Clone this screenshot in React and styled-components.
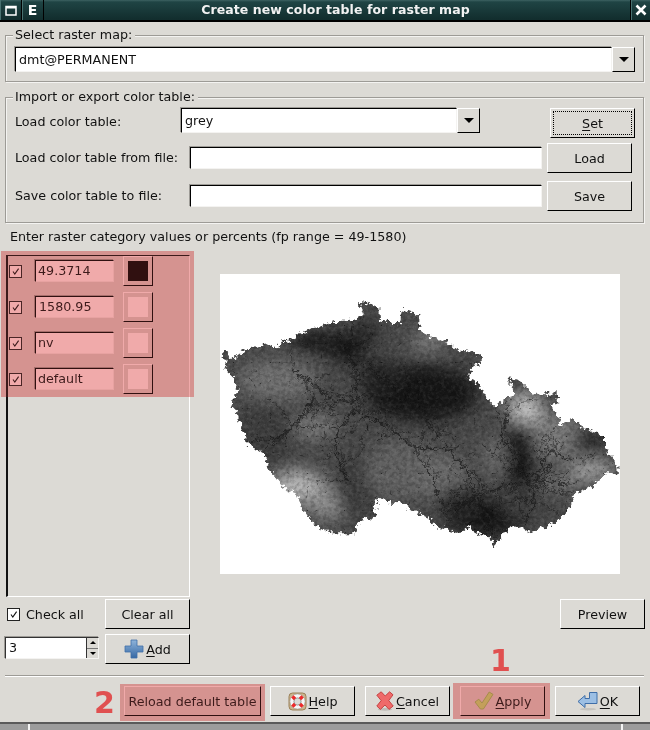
import React from "react"
import styled, { createGlobalStyle } from "styled-components"

const GlobalStyle = createGlobalStyle`
  html, body {
    margin: 0;
    padding: 0;
    background: #dcdad5;
  }
  * {
    box-sizing: border-box;
  }
`

const Page = styled.div`
  position: relative;
  width: 650px;
  height: 730px;
  overflow: hidden;
  display: flex;
  flex-direction: column;
  background: #dcdad5;
  color: #111;
  font-family: "DejaVu Sans", sans-serif;
  font-size: 12.7px;
`

const TitleBar = styled.div`
  height: 22px;
  flex: none;
  display: flex;
  background: linear-gradient(#3d6262 0, #1f4444 2px, #122e2e 19px);
  border-bottom: 2px solid #000;
`

const TitleButton = styled.div`
  width: ${(p) => p.$w}px;
  flex: none;
  display: flex;
  align-items: center;
  justify-content: center;
  color: #fff;
  font-weight: bold;
  font-size: 14px;
  border-left: ${(p) => (p.$left ? "1px solid #000" : "none")};
  border-right: ${(p) => (p.$right ? "1px solid #000" : "none")};
  box-shadow: inset 1px 0 #48706f;
`

const TitleText = styled.div`
  flex: 1;
  text-align: center;
  color: #f2f2f2;
  font-weight: bold;
  font-size: 12.5px;
  letter-spacing: 0.06px;
  line-height: 20px;
  padding-right: 3px;
`

const Group = styled.div`
  position: relative;
  margin: ${(p) => p.$top}px 6px 0 5px;
  height: ${(p) => p.$h}px;
  border: 1px solid #9d9b96;
  box-shadow: inset 1px 1px #f4f3f1, 1px 1px #f4f3f1;
  padding: ${(p) => p.$pad}px 0 0 9px;
`

const Legend = styled.div`
  position: absolute;
  top: -9px;
  left: 7px;
  padding: 0 3px 0 2px;
  line-height: 16px;
  background: #dcdad5;
`

const Row = styled.div`
  display: flex;
  align-items: ${(p) => p.$align || "center"};
  height: ${(p) => p.$h}px;
  margin-top: ${(p) => p.$top || 0}px;
`

const Label = styled.div`
  width: ${(p) => p.$w}px;
  flex: none;
  white-space: nowrap;
  line-height: ${(p) => p.$line || 16}px;
`

const Entry = styled.div`
  flex: none;
  width: ${(p) => p.$w}px;
  height: ${(p) => p.$h}px;
  margin-left: ${(p) => p.$left || 0}px;
  background: #fff;
  border: 1px solid;
  border-color: #000 #f4f3f1 #f4f3f1 #000;
  box-shadow: -1px -1px #9d9b96;
  padding-left: ${(p) => p.$pad ?? 3}px;
  line-height: ${(p) => p.$h - 2}px;
  white-space: nowrap;
`

const Raised = styled.div`
  flex: none;
  width: ${(p) => p.$w}px;
  height: ${(p) => p.$h}px;
  margin-left: ${(p) => p.$left || 0}px;
  display: flex;
  align-items: center;
  justify-content: center;
  gap: 2px;
  background: #dcdad5;
  border: 1px solid;
  border-color: #fff #000 #000 #fff;
  white-space: nowrap;
`

const DefaultRing = styled(Raised)`
  padding: 2px;
`

const FocusBox = styled.div`
  width: 100%;
  height: 100%;
  display: flex;
  align-items: center;
  justify-content: center;
  border: 1px dotted #000;
`

const ArrowDown = styled.span`
  width: 0;
  height: 0;
  border-left: 5px solid transparent;
  border-right: 5px solid transparent;
  border-top: 5px solid #000;
`

const Hint = styled.div`
  margin: 6px 0 0 10px;
  line-height: 16px;
  height: 16px;
`

const Middle = styled.div`
  display: flex;
  margin-top: 10px;
  height: 342px;
  flex: none;
`

const ColorList = styled.div`
  width: 184px;
  margin-left: 6px;
  height: 342px;
  flex: none;
  display: flex;
  flex-direction: column;
  gap: 6px;
  border-style: solid;
  border-width: 1px 1px 1px 2px;
  border-color: #111 #fff #fff #111;
  padding-left: 1px;
`

const CheckBox = styled.span`
  flex: none;
  width: 13px;
  height: 13px;
  display: flex;
  background: #fff;
  border: 1px solid #222;
`

const ColorSwatch = styled.span`
  width: 20px;
  height: 20px;
  background: ${(p) => p.$color};
`

const MapPanel = styled.div`
  margin: 19px 0 0 30px;
  width: 400px;
  height: 300px;
  flex: none;
  background: #fff;
`

const Controls = styled.div`
  display: flex;
  justify-content: space-between;
  padding-right: 5px;
  margin-top: 2px;
  flex: none;
`

const ControlsLeft = styled.div`
  display: flex;
  flex-direction: column;
  gap: 5px;
`

const CheckRow = styled.div`
  display: flex;
  align-items: center;
  gap: 6px;
  height: 30px;
  padding-left: 7px;
`

const CheckLabel = styled.span`
  width: 73px;
`

const SpinBox = styled.div`
  display: flex;
  height: 22px;
  width: 94px;
  margin: 3px 0 0 5px;
  border: 1px solid;
  border-color: #333 #f4f3f1 #f4f3f1 #333;
  box-shadow: -1px -1px #9d9b96;
  background: #fff;
  line-height: 20px;
  padding-left: 3px;
  justify-content: space-between;
`

const SpinButtons = styled.div`
  width: 12px;
  flex: none;
  display: flex;
  flex-direction: column;
  background: #dcdad5;
  border-left: 1px solid #333;
`

const SpinHalf = styled.div`
  flex: 1;
  display: flex;
  align-items: center;
  justify-content: center;
  &:first-child {
    border-bottom: 1px solid #777;
  }
  &::after {
    content: "";
    border-left: 3px solid transparent;
    border-right: 3px solid transparent;
    border-${(p) => (p.$up ? "bottom" : "top")}: 3px solid #000;
  }
`

const Separator = styled.div`
  margin: 11px 6px 0 5px;
  height: 2px;
  flex: none;
  background: linear-gradient(#9d9b96 1px, #fff 1px);
`

const ButtonBar = styled.div`
  display: flex;
  margin-top: 9px;
  padding-left: 124px;
  flex: none;
`

const Underline = styled.span`
  text-decoration: underline;
  text-underline-offset: 2px;
`

const DesktopStrip = styled.div`
  position: absolute;
  left: 0;
  right: 0;
  top: 722px;
  height: 8px;
  display: flex;
  background: #9c9c9c;
  border-top: 2px solid #5a5a5a;
`

const StripTick = styled.span`
  width: 2px;
  height: 100%;
  background: #f4f4f4;
  margin-left: ${(p) => p.$left}px;
`

const HighlightLayer = styled.div`
  position: absolute;
  left: ${(p) => p.$x}px;
  top: ${(p) => p.$y}px;
  width: ${(p) => p.$w}px;
  height: ${(p) => p.$h}px;
`

const HighlightTint = styled(HighlightLayer)`
  background: rgb(236, 164, 164);
  mix-blend-mode: multiply;
`

const HighlightGlow = styled(HighlightLayer)`
  background: rgb(48, 16, 16);
  mix-blend-mode: screen;
`

const Callout = styled.div`
  position: absolute;
  left: ${(p) => p.$x}px;
  top: ${(p) => p.$y}px;
  color: #e05050;
  font-weight: bold;
  font-size: 30px;
  line-height: 32px;
`

const rows = [
  { value: "49.3714", color: "#000", pad: 2 },
  { value: "1580.95", color: "#fff", pad: 3 },
  { value: "nv", color: "#fff", pad: 2 },
  { value: "default", color: "#fff", pad: 2 },
]

const Highlight = (props) => (
  <>
    <HighlightTint {...props} />
    <HighlightGlow {...props} />
  </>
)

const CheckMark = () => (
  <svg width="11" height="11" viewBox="0 0 11 11">
    <path d="M3 5.5 L4.8 8 L8.6 2.6" fill="none" stroke="#111" strokeWidth="1.1" />
  </svg>
)

const WindowIcon = () => (
  <svg width="12" height="11" viewBox="0 0 12 11">
    <path d="M1 1.5h10v8.5H1z" fill="none" stroke="#fff" strokeWidth="1.5" />
    <path d="M1 2.5h10" stroke="#fff" strokeWidth="2" />
  </svg>
)

const CloseIcon = () => (
  <svg width="12" height="12" viewBox="0 0 12 12">
    <path d="M1.5 1.5l9 9M10.5 1.5l-9 9" stroke="#fff" strokeWidth="2.6" />
  </svg>
)

const PlusIcon = () => (
  <svg width="20" height="20" viewBox="0 0 20 20">
    <defs>
      <linearGradient id="plusFill" x1="0" y1="0" x2="0" y2="1">
        <stop offset="0" stopColor="#8fb4da" />
        <stop offset="1" stopColor="#3668a4" />
      </linearGradient>
    </defs>
    <path
      d="M7 1h6v6h6v6h-6v6H7v-6H1V7h6z"
      fill="url(#plusFill)"
      stroke="#3f6ea8"
      strokeWidth="0.8"
    />
  </svg>
)

const HelpIcon = () => (
  <svg width="19" height="19" viewBox="0 0 19 19">
    <rect x="1" y="1" width="17" height="17" rx="3.5" fill="#cbb48c" stroke="#9a8058" />
    <circle cx="9.5" cy="9.5" r="7.6" fill="#f6f6f6" stroke="#999" strokeWidth="0.6" />
    <circle cx="9.5" cy="9.5" r="3.6" fill="#dcdad5" stroke="#777" strokeWidth="0.7" />
    <path
      d="M4.4 4.4l2.6 2.6M14.6 4.4l-2.6 2.6M4.4 14.6l2.6-2.6M14.6 14.6l-2.6-2.6"
      stroke="#ee2a2a"
      strokeWidth="3.4"
    />
  </svg>
)

const CancelIcon = () => (
  <svg width="18" height="20" viewBox="0 0 18 20">
    <ellipse cx="9" cy="18.4" rx="7" ry="1.3" fill="#bdbbb6" />
    <path
      d="M0.8 4.2 L5.2 0.8 L9.2 5 L13.6 0.8 L17 3.8 L12.8 9.6 L17.2 15 L13 18.4 L9 14 L4.4 18.4 L0.8 15 L5.2 9.6z"
      fill="#ef6a6a"
      stroke="#c23a3a"
      strokeWidth="0.9"
    />
  </svg>
)

const ApplyIcon = () => (
  <svg width="20" height="20" viewBox="0 0 20 20">
    <path
      d="M1 11 L4.8 8.2 L8 12 L15.2 1 L19 3.4 L9.4 18 L6.4 18z"
      fill="#c5ee7a"
      stroke="#96c85a"
      strokeWidth="0.9"
    />
  </svg>
)

const OkIcon = () => (
  <svg width="21" height="20" viewBox="0 0 21 20">
    <ellipse cx="11" cy="18.2" rx="8" ry="1.3" fill="#c5c3be" />
    <path
      d="M1 10.5 L8 4.5 V7.5 H12.5 V1.5 H20 V12.5 H8 V16.5z"
      fill="#9cbfe4"
      stroke="#3f6ea8"
      strokeWidth="1"
    />
  </svg>
)

const outline =
  "20,240 35,240 38,258 48,270 60,260 90,235 130,232 155,220 185,235 200,215 230,210 260,188 290,175 320,170 360,155 420,148 445,135 432,95 455,100 490,112 492,150 525,158 555,160 560,120 585,125 610,135 610,160 620,185 660,205 700,215 725,240 765,245 800,260 800,275 770,295 755,320 790,345 815,385 840,410 870,385 900,375 880,325 925,340 960,375 1025,370 1030,400 1005,405 1030,440 1040,465 1075,445 1090,465 1130,485 1170,495 1170,530 1185,555 1210,590 1212,610 1175,610 1130,650 1080,670 1060,720 1020,760 950,785 890,765 860,800 835,832 830,800 790,790 755,770 735,790 665,770 640,740 590,720 555,695 520,700 490,680 475,745 430,750 420,790 350,790 300,765 262,710 240,670 200,650 165,600 145,550 100,525 80,480 70,440 48,400 70,360 55,320 28,295 35,270 18,255"

const blobs = [
  [190, 330, 120, 60, "#707070"],
  [150, 500, 90, 110, "#3e3e3e"],
  [300, 470, 70, 40, "#747474"],
  [250, 650, 80, 50, "#b4b4b4"],
  [340, 700, 60, 50, "#8e8e8e"],
  [420, 650, 60, 100, "#3c3c3c"],
  [560, 600, 110, 90, "#626262"],
  [680, 620, 80, 70, "#6a6a6a"],
  [330, 215, 110, 28, "#141414"],
  [400, 240, 60, 40, "#181818"],
  [620, 370, 170, 85, "#141414"],
  [500, 320, 70, 50, "#222"],
  [640, 215, 50, 22, "#909090"],
  [450, 190, 40, 40, "#282828"],
  [930, 415, 55, 42, "#c4c4c4"],
  [1020, 500, 90, 70, "#7a7a7a"],
  [915, 560, 50, 100, "#141414"],
  [1130, 600, 70, 30, "#a4a4a4"],
  [1040, 640, 70, 30, "#6e6e6e"],
  [820, 740, 130, 55, "#121212"],
  [930, 700, 70, 50, "#404040"],
  [730, 700, 60, 50, "#282828"],
  [930, 345, 30, 20, "#1c1c1c"],
  [1120, 510, 50, 30, "#202020"],
  [840, 560, 40, 60, "#686868"],
]

const rivers = [
  [[230, 300], [300, 340], [350, 390], [420, 395], [430, 310], [400, 240], [415, 170]],
  [[420, 420], [370, 480], [360, 540], [400, 640]],
  [[420, 420], [520, 470], [590, 530], [700, 540], [760, 610], [800, 700], [830, 800]],
  [[300, 380], [250, 450], [220, 480], [160, 530]],
  [[640, 600], [680, 700], [760, 700], [800, 680], [880, 640], [960, 630], [1010, 580]],
  [[880, 420], [860, 500], [930, 610], [960, 690], [930, 770]],
  [[1060, 570], [1000, 540], [960, 630], [1050, 640]],
  [[480, 310], [620, 400], [650, 490]],
]

// little side streams hanging off the main rivers, seeded so the map stays the same
const branchPaths = () => {
  let seed = 17
  const next = () => {
    seed = (seed * 9301 + 49297) % 233280
    return seed / 233280
  }
  const paths = []
  rivers.forEach((river) => {
    river.slice(1).forEach(([x, y], i) => {
      const [px, py] = river[i]
      for (let b = 0; b < 5; b++) {
        const t = next()
        const sx = px + (x - px) * t
        const sy = py + (y - py) * t
        const angle = next() * Math.PI * 2
        const len = 25 + next() * 50
        const mx = sx + Math.cos(angle) * len
        const my = sy + Math.sin(angle) * len
        const bend = angle + (next() - 0.5) * 1.6
        const ex = mx + Math.cos(bend) * len * 0.6
        const ey = my + Math.sin(bend) * len * 0.6
        paths.push(`M${sx} ${sy} L${mx} ${my} L${ex} ${ey}`)
      }
    })
  })
  return paths
}

const riverPaths = rivers.map((r) => "M" + r.map((pt) => pt.join(" ")).join(" L"))

const TerrainMap = () => (
  <svg width="400" height="300" viewBox="15 12 1200 900">
    <defs>
      <filter id="jag" x="-5%" y="-5%" width="110%" height="110%">
        <feTurbulence type="fractalNoise" baseFrequency="0.07" numOctaves="3" seed="4" />
        <feDisplacementMap in="SourceGraphic" scale="30" xChannelSelector="R" yChannelSelector="G" />
      </filter>
      <filter id="soft" x="-20%" y="-20%" width="140%" height="140%">
        <feGaussianBlur stdDeviation="24" />
      </filter>
      <filter id="lightGrain" x="0" y="0" width="100%" height="100%" colorInterpolationFilters="sRGB">
        <feTurbulence type="fractalNoise" baseFrequency="0.09" numOctaves="4" seed="7" />
        <feColorMatrix values="0 0 0 0 1  0 0 0 0 1  0 0 0 0 1  3 0 0 0 -1.3" />
      </filter>
      <filter id="darkGrain" x="0" y="0" width="100%" height="100%" colorInterpolationFilters="sRGB">
        <feTurbulence type="fractalNoise" baseFrequency="0.08" numOctaves="4" seed="11" />
        <feColorMatrix values="0 0 0 0 0  0 0 0 0 0  0 0 0 0 0  3 0 0 0 -1.2" />
      </filter>
      <filter id="veins" x="0" y="0" width="100%" height="100%" colorInterpolationFilters="sRGB">
        <feTurbulence type="turbulence" baseFrequency="0.018" numOctaves="5" seed="23" />
        <feColorMatrix values="0 0 0 0 0  0 0 0 0 0  0 0 0 0 0  -10 0 0 0 1.1" />
      </filter>
      <mask id="czechMask" maskUnits="userSpaceOnUse" x="0" y="0" width="1230" height="930">
        <polygon points={outline} fill="#fff" filter="url(#jag)" />
      </mask>
    </defs>
    <g mask="url(#czechMask)">
      <rect x="0" y="0" width="1230" height="930" fill="#4a4a4a" />
      <g filter="url(#soft)">
        {blobs.map(([cx, cy, rx, ry, fill]) => (
          <ellipse key={`${cx}-${cy}`} cx={cx} cy={cy} rx={rx} ry={ry} fill={fill} />
        ))}
      </g>
      <rect x="0" y="0" width="1230" height="930" filter="url(#lightGrain)" opacity="0.07" />
      <rect x="0" y="0" width="1230" height="930" filter="url(#darkGrain)" opacity="0.18" />
      <rect x="0" y="0" width="1230" height="930" filter="url(#veins)" opacity="0.55" />
      <g filter="url(#jag)" fill="none" stroke="#141414" opacity="0.7">
        <g strokeWidth="3.5">
          {riverPaths.map((d) => (
            <path key={d} d={d} />
          ))}
        </g>
        <g strokeWidth="2.2">
          {branchPaths().map((d) => (
            <path key={d} d={d} />
          ))}
        </g>
      </g>
    </g>
  </svg>
)

const App = () => {
  return (
    <>
      <GlobalStyle />
      <Page>
        <TitleBar>
          <TitleButton $w={22} $right>
            <WindowIcon />
          </TitleButton>
          <TitleButton $w={22} $right>
            E
          </TitleButton>
          <TitleText>Create new color table for raster map</TitleText>
          <TitleButton $w={20} $left>
            <CloseIcon />
          </TitleButton>
        </TitleBar>

        <Group $top={13} $h={47} $pad={11}>
          <Legend>Select raster map:</Legend>
          <Row $h={25} $align="stretch">
            <Entry $w={597} $h={25}>
              dmt@PERMANENT
            </Entry>
            <Raised $w={23} $h={25}>
              <ArrowDown />
            </Raised>
          </Row>
        </Group>

        <Group $top={15} $h={126} $pad={10}>
          <Legend>Import or export color table:</Legend>
          <Row $h={30} $align="flex-start">
            <Label $w={166} $line={28}>
              Load color table:
            </Label>
            <Entry $w={276} $h={25}>
              grey
            </Entry>
            <Raised $w={23} $h={25}>
              <ArrowDown />
            </Raised>
            <DefaultRing $w={85} $h={30} $left={70}>
              <FocusBox>
                <span>
                  <Underline>S</Underline>et
                </span>
              </FocusBox>
            </DefaultRing>
          </Row>
          <Row $h={30} $top={5}>
            <Label $w={175}>Load color table from file:</Label>
            <Entry $w={352} $h={22}></Entry>
            <Raised $w={85} $h={30} $left={5}>
              Load
            </Raised>
          </Row>
          <Row $h={30} $top={8}>
            <Label $w={175}>Save color table to file:</Label>
            <Entry $w={352} $h={22}></Entry>
            <Raised $w={85} $h={30} $left={5}>
              Save
            </Raised>
          </Row>
        </Group>

        <Hint>Enter raster category values or percents (fp range = 49-1580)</Hint>

        <Middle>
          <ColorList>
            {rows.map((row) => (
              <Row $h={30} key={row.value}>
                <CheckBox>
                  <CheckMark />
                </CheckBox>
                <Entry $w={79} $h={22} $left={13} $pad={row.pad}>
                  {row.value}
                </Entry>
                <Raised $w={30} $h={30} $left={9}>
                  <ColorSwatch $color={row.color} />
                </Raised>
              </Row>
            ))}
          </ColorList>
          <MapPanel>
            <TerrainMap />
          </MapPanel>
        </Middle>

        <Controls>
          <ControlsLeft>
            <CheckRow>
              <CheckBox>
                <CheckMark />
              </CheckBox>
              <CheckLabel>Check all</CheckLabel>
              <Raised $w={85} $h={30}>
                Clear all
              </Raised>
            </CheckRow>
            <Row $h={30} $align="flex-start">
              <SpinBox>
                3
                <SpinButtons>
                  <SpinHalf $up />
                  <SpinHalf />
                </SpinButtons>
              </SpinBox>
              <Raised $w={85} $h={30} $left={6}>
                <PlusIcon />
                <span>
                  <Underline>A</Underline>dd
                </span>
              </Raised>
            </Row>
          </ControlsLeft>
          <Raised $w={85} $h={30}>
            Preview
          </Raised>
        </Controls>

        <Separator />

        <ButtonBar>
          <Raised $w={137} $h={30}>
            Reload default table
          </Raised>
          <Raised $w={85} $h={30} $left={9}>
            <HelpIcon />
            <span>
              <Underline>H</Underline>elp
            </span>
          </Raised>
          <Raised $w={85} $h={30} $left={10}>
            <CancelIcon />
            <span>
              <Underline>C</Underline>ancel
            </span>
          </Raised>
          <Raised $w={85} $h={30} $left={10}>
            <ApplyIcon />
            <span>
              <Underline>A</Underline>pply
            </span>
          </Raised>
          <Raised $w={85} $h={30} $left={10}>
            <OkIcon />
            <span>
              <Underline>O</Underline>K
            </span>
          </Raised>
        </ButtonBar>

        <DesktopStrip>
          <StripTick $left={28} />
          <StripTick $left={591} />
        </DesktopStrip>

        <Highlight $x={1} $y={251} $w={193} $h={146} />
        <Highlight $x={120} $y={684} $w={145} $h={37} />
        <Highlight $x={453} $y={683} $w={97} $h={36} />
        <Callout $x={94} $y={687}>2</Callout>
        <Callout $x={490} $y={645}>1</Callout>
      </Page>
    </>
  )
}

export default App
